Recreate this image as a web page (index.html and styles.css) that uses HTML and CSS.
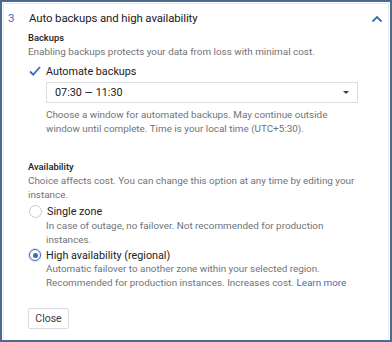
FILE: index.html
```html
<!DOCTYPE html>
<html>
<head>
<meta charset="utf-8">
<link rel="stylesheet" href="styles.css">
</head>
<body>
<div class="frame">
  <div class="card">
    <div class="header">
      <span class="step">3</span>
      <span class="title">Auto backups and high availability</span>
      <svg class="chev" width="12" height="8" viewBox="0 0 12 8"><path d="M1.5 6.5 L6 2 L10.5 6.5" fill="none" stroke="#3b6cb4" stroke-width="1.8"/></svg>
    </div>
    <div class="body">
      <div class="label">Backups</div>
      <div class="desc">Enabling backups protects your data from loss with minimal cost.</div>
      <div class="option check-row">
        <svg class="checkbox" width="12" height="12" viewBox="0 0 12 12"><path d="M1 6.5 L4.2 9.7 L11 2" fill="none" stroke="#3f6bb8" stroke-width="1.8"/></svg>
        <span class="opt-text">Automate backups</span>
      </div>
      <div class="indent">
        <div class="select"><span>07:30 — 11:30</span><span class="caret"></span></div>
        <div class="desc help">Choose a window for automated backups. May continue outside<br>window until complete. Time is your local time (UTC+5:30).</div>
      </div>
      <div class="label avail">Availability</div>
      <div class="desc">Choice affects cost. You can change this option at any time by editing your<br>instance.</div>
      <div class="option radio-row first">
        <span class="radio"></span>
        <span class="opt-text">Single zone</span>
      </div>
      <div class="desc indent">In case of outage, no failover. Not recommended for production<br>instances.</div>
      <div class="option radio-row">
        <span class="radio on"></span>
        <span class="opt-text">High availability (regional)</span>
      </div>
      <div class="desc indent after">Automatic failover to another zone within your selected region.<br>Recommended for production instances. Increases cost. <a class="link">Learn more</a></div>
      <button class="close">Close</button>
    </div>
  </div>
</div>
</body>
</html>
```
FILE: styles.css
```css
html, body { margin: 0; padding: 0; }
body { font-family: Roboto, "Liberation Sans", sans-serif; background: #fff; }
.frame {
  width: 392px; height: 342px; box-sizing: border-box;
  border: 2px solid #4d6a8c; background: #fff; padding: 1px;
}
.card {
  height: 100%; box-sizing: border-box;
  border: 1px solid #e8e8e8; border-bottom: none;
}
.header {
  display: flex; align-items: center; height: 27px; padding: 1px 0 0 4px; box-sizing: border-box;
}
.step { color: #3b6cb4; font-size: 11.5px; width: 21px; }
.title { color: #202124; font-size: 11.4px; letter-spacing: -0.1px; flex: 1; }
.chev { margin-right: 5px; margin-top: 1px; }
.body { padding: 0 0 0 24px; }
.label { font-size: 9.4px; font-weight: 500; color: #202124; line-height: 14px; }
.desc { font-size: 9.9px; color: #707378; line-height: 14px; white-space: nowrap; }
.option { display: flex; align-items: center; }
.check-row { margin-top: 2px; height: 20px; }
.checkbox { margin: 0 5px 0 1px; }
.opt-text { font-size: 10.8px; color: #202124; }
.indent { padding-left: 18px; }
.select {
  width: 312px; height: 21px; box-sizing: border-box; border: 1px solid #dcdde0;
  display: flex; align-items: center; justify-content: space-between; padding: 0 8px 0 8px;
  font-size: 10.8px; color: #202124; margin-top: 1px;
}
.caret { width: 0; height: 0; border-left: 3.5px solid transparent; border-right: 3.5px solid transparent; border-top: 3.5px solid #3c4043; }
.help { margin-top: 5px; }
.avail { margin-top: 24px; }
.radio-row { height: 16px; }
.radio-row.first { margin-top: 1px; }
.after { margin-top: -1px; }
.radio {
  width: 11px; height: 11px; border-radius: 50%; border: 1px solid #c8cace; margin: 0 5px 0 1px; position: relative;
}
.radio.on { border: 1.5px solid #3f6bb8; width: 10px; height: 10px; box-shadow: 0 0 0 1px #dbe4f5; }
.radio.on::after {
  content: ""; position: absolute; left: 2.5px; top: 2.5px; width: 5px; height: 5px; border-radius: 50%; background: #3f6bb8;
}
.link { color: #3f6bb8; }
.close {
  display: block; margin-top: 18px; font-family: Roboto, sans-serif; font-size: 10.5px; color: #3c4043;
  background: #fff; border: 1px solid #dadce0; border-radius: 2px; height: 21px; width: 41px; padding: 0;
}
```
